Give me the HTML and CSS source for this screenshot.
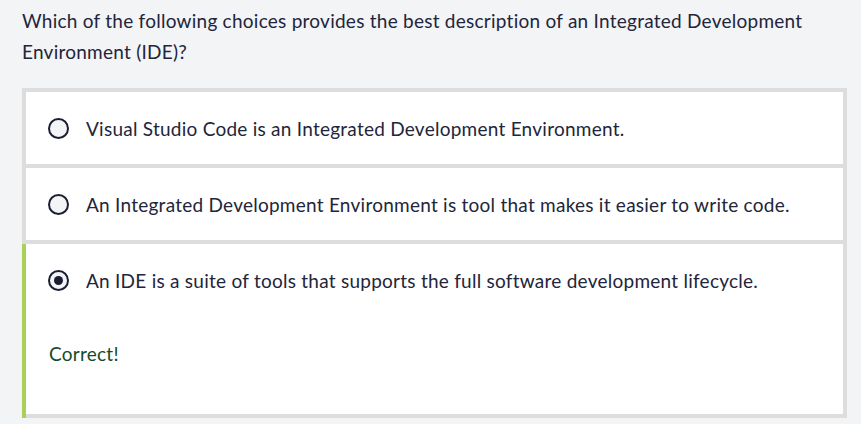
FILE: index.html
```html
<!DOCTYPE html>
<html>
<head>
<meta charset="utf-8">
<link rel="stylesheet" href="styles.css">
</head>
<body>
<div class="quiz">
  <p class="question">Which of the following choices provides the best description of an Integrated Development Environment (IDE)?</p>
  <div class="options">
    <div class="option">
      <div class="line"><span class="radio"></span><span class="label">Visual Studio Code is an Integrated Development Environment.</span></div>
    </div>
    <div class="option">
      <div class="line"><span class="radio"></span><span class="label">An Integrated Development Environment is tool that makes it easier to write code.</span></div>
    </div>
    <div class="option selected">
      <div class="line"><span class="radio checked"></span><span class="label">An IDE is a suite of tools that supports the full software development lifecycle.</span></div>
      <div class="feedback">Correct!</div>
    </div>
  </div>
</div>
</body>
</html>
```

FILE: styles.css
```css
html, body {
  margin: 0;
  padding: 0;
  background: #f3f4f6;
}
body {
  font-family: Lato, "Liberation Sans", sans-serif;
  color: #22253b;
  letter-spacing: 0.25px;
}
.quiz {
  padding: 5px 14px 0 22px;
}
.question {
  margin: 0;
  font-size: 19px;
  line-height: 31px;
  width: 810px;
}
.options {
  margin-top: 21px;
  width: 825px;
  background: #dddddd;
  padding: 4px;
  box-sizing: border-box;
  display: flex;
  flex-direction: column;
  gap: 4px;
}
.option {
  background: #ffffff;
}
.option.selected {
  margin-left: -4px;
  margin-bottom: -4px;
  padding-bottom: 4px;
  border-left: 4px solid #a9d159;
  background: linear-gradient(#fff, #fff) content-box, #dddddd;
}
.line {
  height: 72px;
  display: flex;
  align-items: center;
  padding-left: 22px;
}
.radio {
  width: 17px;
  height: 17px;
  border: 2.5px solid #1b1d33;
  border-radius: 50%;
  background: #f3f4f6;
  margin-right: 17px;
  display: flex;
  align-items: center;
  justify-content: center;
  flex: none;
}
.radio.checked::after {
  content: "";
  width: 9px;
  height: 9px;
  border-radius: 50%;
  background: #1b1d33;
}
.label {
  font-size: 19px;
}
.feedback {
  padding: 24px 0 46px 23px;
  font-size: 19px;
  line-height: 28px;
  color: #144a2c;
}
```
